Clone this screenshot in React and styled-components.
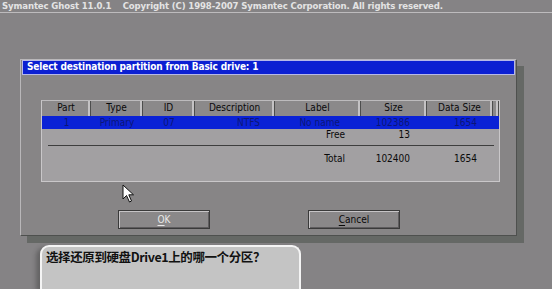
import React from 'react';
import styled, { createGlobalStyle } from 'styled-components';

const GlobalStyle = createGlobalStyle`
  html, body {
    margin: 0;
    padding: 0;
    background: #858385;
    width: 552px;
    height: 289px;
    overflow: hidden;
  }
  * { box-sizing: border-box; }
`;

const Screen = styled.div`
  position: relative;
  width: 552px;
  height: 289px;
  display: flex;
  flex-direction: column;
  font-family: "DejaVu Sans Condensed", "DejaVu Sans", sans-serif;
`;

const TopBar = styled.div`
  height: 13px;
  padding-left: 2px;
  border-bottom: 1px solid #bdbbbd;
  color: #e4e4e4;
  font-weight: bold;
  font-size: 9.5px;
  line-height: 11px;
  letter-spacing: -0.12px;
  white-space: pre;
`;

const Dialog = styled.div`
  margin: 46px 0 0 20px;
  width: 497px;
  height: 177px;
  background: #878586;
  border: 1px solid #b9b7b9;
  border-right-color: #4e504e;
  border-bottom-color: #4e504e;
  box-shadow: 7px 7px 0 #656865;
  display: flex;
  flex-direction: column;
`;

const TitleBar = styled.div`
  height: 15px;
  margin: 0 1px 0 1px;
  background: #0b1fd2;
  border: 1px solid #b6b8e8;
  color: #ffffff;
  font-weight: bold;
  font-size: 10px;
  line-height: 12px;
  padding-left: 4px;
  letter-spacing: -0.15px;
`;

const Panel = styled.div`
  margin: 25px 0 0 20px;
  width: 459px;
  height: 82px;
  background: #a2a0a2;
  border: 1px solid #c9c7c9;
  border-top-color: #bdbbbd;
  display: flex;
  flex-direction: column;
`;

const cols = '49px 52px 52px 80px 86px 66px 66px 6px';

const HeaderRow = styled.div`
  display: grid;
  grid-template-columns: ${cols};
  height: 15px;
  background: #8b898a;
`;

const HeadCell = styled.div`
  border-right: 1px solid #4d4d4d;
  box-shadow: inset -2px 0 0 #c4c2c4;
  color: #0a0a0a;
  font-size: 10px;
  line-height: 14px;
  text-align: center;
`;

const Row = styled.div`
  display: grid;
  grid-template-columns: ${cols};
  height: ${p => p.$h || 13}px;
  background: ${p => (p.$selected ? '#0a22d6' : 'transparent')};
  color: ${p => (p.$selected ? '#0c1676' : '#0a0a0a')};
  font-size: 10px;
  line-height: ${p => p.$h || 13}px;
`;

const Cell = styled.div`
  text-align: ${p => p.$align || 'center'};
  padding-right: ${p => p.$pr || 0}px;
  white-space: nowrap;
`;

const Divider = styled.div`
  margin: 4px 5px 0 6px;
  height: 1px;
  background: #3e3e3e;
`;

const ButtonRow = styled.div`
  display: flex;
  gap: 98px;
  margin: 28px 0 0 97px;
`;

const Button = styled.div`
  width: 92px;
  height: 19px;
  background: #8a8889;
  border: 1px solid #3a3a3a;
  box-shadow: inset 1px 1px 0 #c6c4c6, inset -1px -1px 0 #5e5c5e;
  color: ${p => (p.$light ? '#e8e8e8' : '#0a0a0a')};
  font-size: 10px;
  line-height: 17px;
  text-align: center;
  u { text-decoration-thickness: 1px; text-underline-offset: 2px; }
`;

const Bubble = styled.div`
  margin: 9px 0 0 40px;
  width: 261px;
  flex: 1;
  background: #c4c4c4;
  border: 2px solid #f4f4f4;
  border-bottom: none;
  border-radius: 9px 9px 0 0;
  box-shadow: -4px 2px 4px rgba(40, 40, 40, 0.35);
  padding: 2px 0 0 4px;
  font-family: "Noto Sans CJK SC", "DejaVu Sans", sans-serif;
  font-weight: bold;
  font-size: 12.5px;
  line-height: 16px;
  color: #111;
  letter-spacing: -0.4px;
`;

const Cursor = styled.svg`
  position: absolute;
  left: 122px;
  top: 184px;
`;

const headers = ['Part', 'Type', 'ID', 'Description', 'Label', 'Size', 'Data Size', ''];

export default function App() {
  return (
    <>
      <GlobalStyle />
      <Screen>
        <TopBar>{'Symantec Ghost 11.0.1    Copyright (C) 1998-2007 Symantec Corporation. All rights reserved.'}</TopBar>
        <Dialog>
          <TitleBar>Select destination partition from Basic drive: 1</TitleBar>
          <Panel>
            <HeaderRow>
              {headers.map((h, i) => (
                <HeadCell key={i}>{h}</HeadCell>
              ))}
            </HeaderRow>
            <Row $selected>
              <Cell>1</Cell>
              <Cell>Primary</Cell>
              <Cell>07</Cell>
              <Cell $align="right" $pr={15}>NTFS</Cell>
              <Cell $align="right" $pr={21}>No name</Cell>
              <Cell $align="right" $pr={17}>102386</Cell>
              <Cell $align="right" $pr={16}>1654</Cell>
              <Cell />
            </Row>
            <Row $h={12}>
              <Cell />
              <Cell />
              <Cell />
              <Cell />
              <Cell $align="right" $pr={16}>Free</Cell>
              <Cell $align="right" $pr={17}>13</Cell>
              <Cell />
              <Cell />
            </Row>
            <Divider />
            <Row $h={26}>
              <Cell />
              <Cell />
              <Cell />
              <Cell />
              <Cell $align="right" $pr={16}>Total</Cell>
              <Cell $align="right" $pr={17}>102400</Cell>
              <Cell $align="right" $pr={16}>1654</Cell>
              <Cell />
            </Row>
          </Panel>
          <ButtonRow>
            <Button $light><u>O</u>K</Button>
            <Button><u>C</u>ancel</Button>
          </ButtonRow>
        </Dialog>
        <Bubble>选择还原到硬盘Drive1上的哪一个分区？</Bubble>
        <Cursor width="14" height="20" viewBox="0 0 14 20">
          <path d="M1 1 L1 15 L4.5 11.5 L7.5 18 L9.5 17 L6.8 10.8 L11.5 10.8 Z" fill="#fff" stroke="#111" strokeWidth="1" strokeLinejoin="miter" />
        </Cursor>
      </Screen>
    </>
  );
}
